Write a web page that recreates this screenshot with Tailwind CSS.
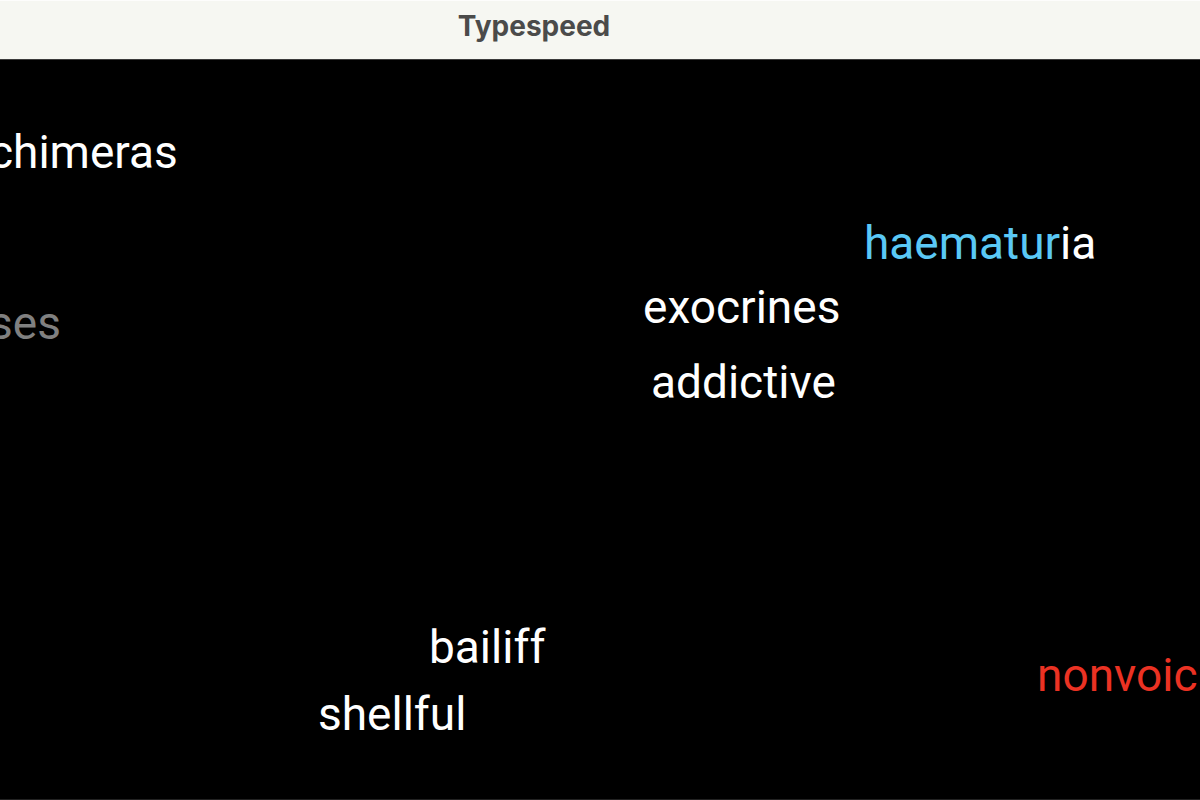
<!DOCTYPE html>
<html lang="en">
<head>
<meta charset="utf-8">
<title>Typespeed</title>
<script src="https://cdn.jsdelivr.net/npm/@tailwindcss/browser@4"></script>
</head>
<body class="flex h-screen flex-col overflow-hidden bg-black">
<header class="h-[60px] shrink-0 border-t border-b border-t-[#fdfdfc] border-b-[#3c3c3c] bg-[#f6f7f2] pt-[7px] pr-[132px] text-center">
<h1 class="font-[Inter,sans-serif] text-[28px] leading-9 font-bold text-[#4b4b4a]">Typespeed</h1>
</header>
<main class="relative grow overflow-hidden border-b border-[#222222] font-[Roboto,sans-serif] text-[46px] leading-[54px] whitespace-nowrap text-white [font-variant-ligatures:none]">
<span class="absolute top-[65px] left-[-11px]">chimeras</span>
<span class="absolute top-[156px] left-[864px]"><span class="text-[#5ac8f5]">haematur</span>ia</span>
<span class="absolute top-[220px] left-[643px]">exocrines</span>
<span class="absolute top-[236px] left-[-11px] text-[#808080]">ses</span>
<span class="absolute top-[295px] left-[651px]">addictive</span>
<span class="absolute top-[560px] left-[429px]">bailiff</span>
<span class="absolute top-[627px] left-[318px]">shellful</span>
<span class="absolute top-[588px] left-[1037px] text-[#eb3223]">nonvoic</span>
</main>
</body>
</html>
